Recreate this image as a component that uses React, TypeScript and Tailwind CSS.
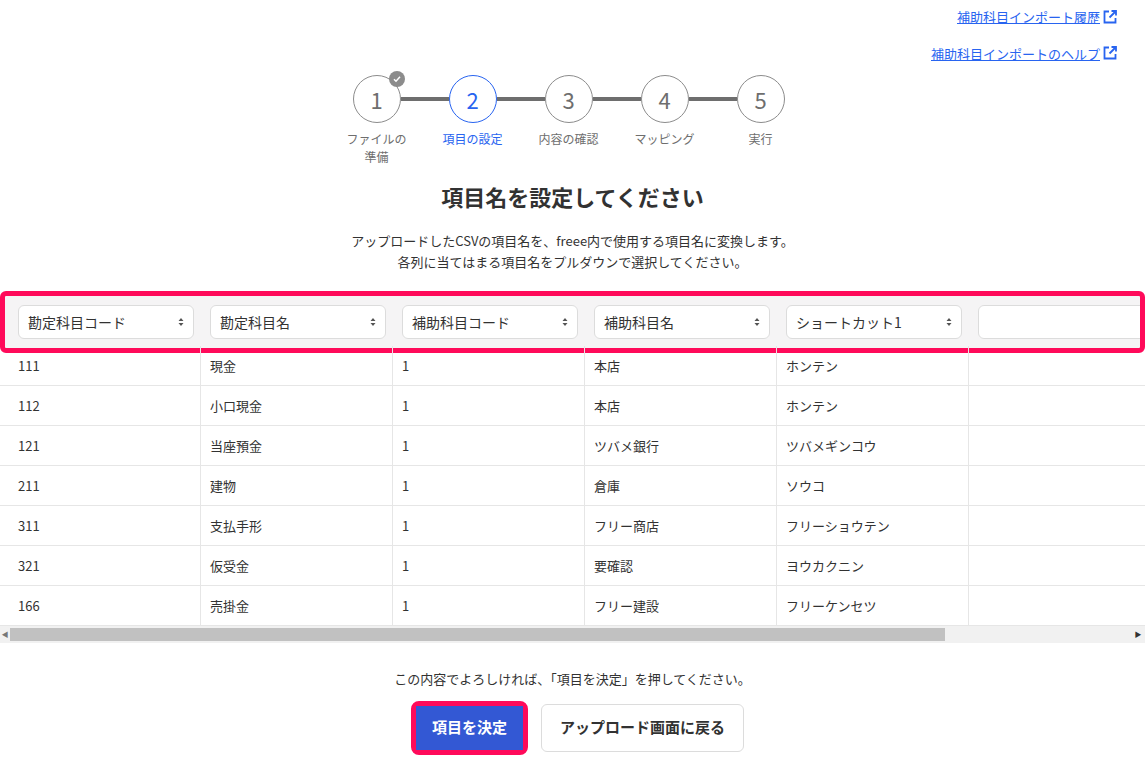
const font = { fontFamily: '"Noto Sans CJK JP", "Liberation Sans", sans-serif' };

const steps = [
  { n: "1", label: ["ファイルの", "準備"], done: true },
  { n: "2", label: ["項目の設定"], active: true },
  { n: "3", label: ["内容の確認"] },
  { n: "4", label: ["マッピング"] },
  { n: "5", label: ["実行"] },
];

const headers = ["勘定科目コード", "勘定科目名", "補助科目コード", "補助科目名", "ショートカット1", ""];

const rows = [
  ["111", "現金", "1", "本店", "ホンテン"],
  ["112", "小口現金", "1", "本店", "ホンテン"],
  ["121", "当座預金", "1", "ツバメ銀行", "ツバメギンコウ"],
  ["211", "建物", "1", "倉庫", "ソウコ"],
  ["311", "支払手形", "1", "フリー商店", "フリーショウテン"],
  ["321", "仮受金", "1", "要確認", "ヨウカクニン"],
  ["166", "売掛金", "1", "フリー建設", "フリーケンセツ"],
];

function ExtIcon() {
  return (
    <svg width="16" height="16" viewBox="0 0 16 16" className="ml-[2px] inline-block">
      <path d="M7 2.5H2.5v11h11V9" fill="none" stroke="#2864f0" strokeWidth="1.8" />
      <path d="M9.5 2h4.5v4.5M14 2L7.5 8.5" fill="none" stroke="#2864f0" strokeWidth="1.8" />
    </svg>
  );
}

function SortArrows() {
  return (
    <svg width="6" height="10" viewBox="0 0 6 10">
      <path d="M3 1L5.5 4H0.5z M3 9L5.5 6H0.5z" fill="#555" />
    </svg>
  );
}

export default function App() {
  return (
    <div style={font} className="w-[1145px] h-[765px] bg-white text-[#323232] relative overflow-hidden">
      {/* links */}
      <div className="flex flex-col items-end pr-[27px] pt-[7px] gap-[17px] text-[13px]">
        <a className="text-[#2864f0] underline flex items-center">補助科目インポート履歴<ExtIcon /></a>
        <a className="text-[#2864f0] underline flex items-center">補助科目インポートのヘルプ<ExtIcon /></a>
      </div>

      {/* stepper */}
      <div className="flex justify-center mt-[12px] mr-[8px]">
        {steps.map((s, i) => (
          <div key={s.n} className="flex items-start">
            <div className="flex flex-col items-center w-[48px]">
              <div className="relative">
                <div
                  className={
                    "w-[48px] h-[48px] rounded-full border flex items-center justify-center text-[22px] bg-white " +
                    (s.active ? "border-[#2864f0] text-[#2864f0]" : "border-[#8c8c8c] text-[#6e6e6e]")
                  }
                >
                  {s.n}
                </div>
                {s.done && (
                  <div className="absolute -top-[4px] -right-[4px] w-[16px] h-[16px] rounded-full bg-[#8c8c8c] flex items-center justify-center">
                    <svg width="10" height="10" viewBox="0 0 10 10">
                      <path d="M2 5.2l2 2 4-4.4" fill="none" stroke="white" strokeWidth="1.5" />
                    </svg>
                  </div>
                )}
              </div>
              <div className={"mt-[7px] text-[12px] leading-[18px] text-center whitespace-nowrap " + (s.active ? "text-[#2864f0]" : "text-[#6e6e6e]")}>
                {s.label.map((l) => (
                  <div key={l}>{l}</div>
                ))}
              </div>
            </div>
            {i < steps.length - 1 && <div className="w-[48px] h-[4px] bg-[#6e6e6e] mt-[22px]" />}
          </div>
        ))}
      </div>

      <h1 className="text-center text-[22px] font-bold mt-[14px] leading-[32px]">項目名を設定してください</h1>
      <p className="text-center text-[13px] leading-[21px] mt-[18px]">
        アップロードしたCSVの項目名を、freee内で使用する項目名に変換します。
        <br />
        各列に当てはまる項目名をプルダウンで選択してください。
      </p>

      {/* table */}
      <div className="mt-[19px] relative">
        <div className="h-[62px] border-[5px] border-[#ff0a5a] rounded-[6px] bg-[#f5f4f5] flex items-center pl-[13px] gap-[16px] overflow-hidden">
          {headers.map((h, i) => (
            <div
              key={i}
              className="shrink-0 w-[176px] h-[34px] bg-white border border-[#dcdcdc] rounded-[6px] flex items-center justify-between px-[9px] text-[14px]"
            >
              <span>{h}</span>
              {h && <SortArrows />}
            </div>
          ))}
        </div>
        <div className="-mt-[7px]">
          {rows.map((r, ri) => (
            <div key={ri} className="flex h-[40px] border-b border-[#e6e6e6] text-[13px]">
              {r.concat([""]).map((c, ci) => (
                <div
                  key={ci}
                  className={
                    "flex items-center pl-[9px] border-r border-[#e6e6e6] " +
                    (ci === 0 ? "w-[201px] pl-[18px]" : ci === 5 ? "flex-1 border-r-0" : "w-[192px]")
                  }
                >
                  {c}
                </div>
              ))}
            </div>
          ))}
        </div>
        {/* scrollbar */}
        <div className="h-[17px] bg-[#f1f1f1] flex items-center">
          <span className="w-[10px] text-[7px] text-[#777] text-center">◀</span>
          <div className="w-[935px] h-[13px] bg-[#c1c1c1]" />
          <div className="flex-1" />
          <span className="w-[14px] text-[7px] text-[#333] text-center">▶</span>
        </div>
      </div>

      <p className="text-center text-[13px] mt-[26px]">この内容でよろしければ、「項目を決定」を押してください。</p>
      <div className="flex justify-center gap-[13px] mt-[12px] ml-[10px]">
        <div className="border-[5px] border-[#ff0a5a] rounded-[8px]">
          <button className="h-[44px] px-[16px] bg-[#3358d4] text-white font-bold text-[15px]">項目を決定</button>
        </div>
        <button className="h-[48px] mt-[3px] px-[18px] border border-[#dcdcdc] rounded-[6px] bg-white font-bold text-[15px]">
          アップロード画面に戻る
        </button>
      </div>
    </div>
  );
}
